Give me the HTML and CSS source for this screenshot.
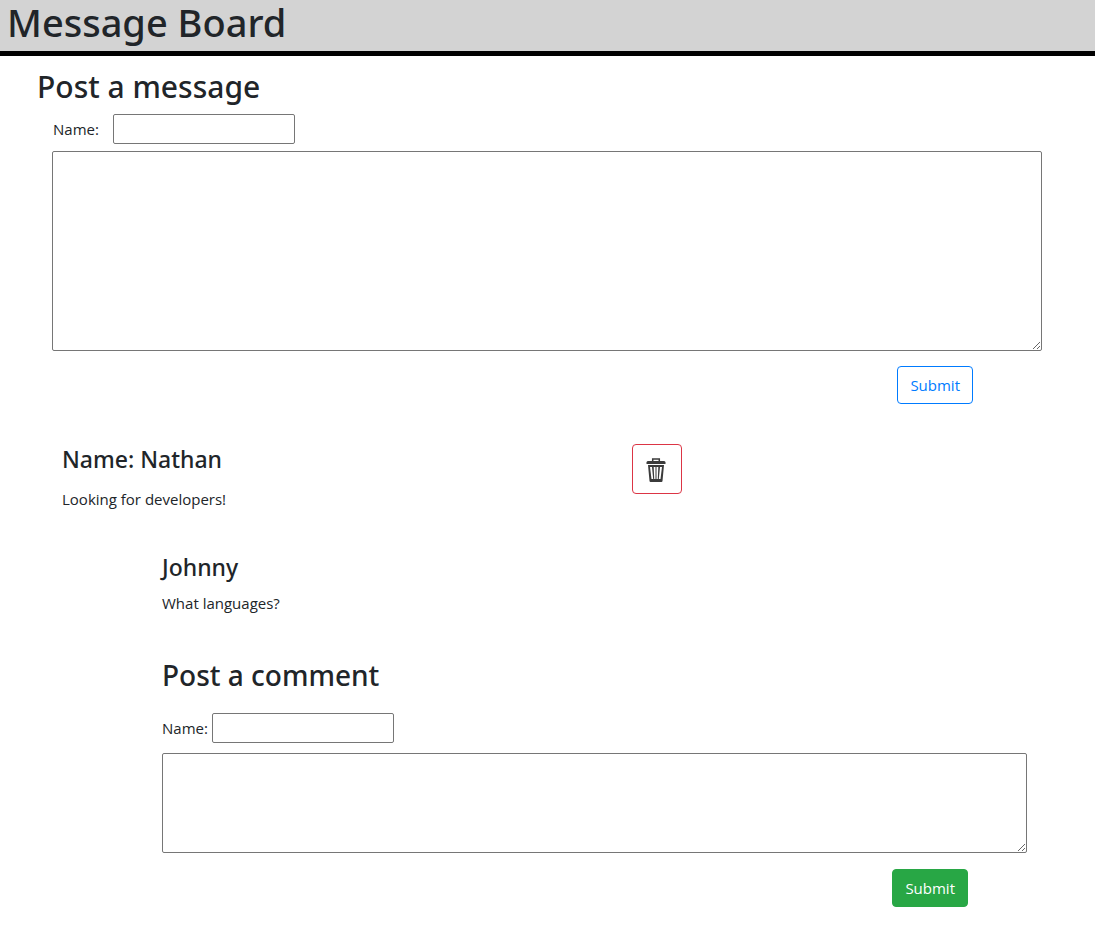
FILE: index.html
```html
<!DOCTYPE html>
<html lang="en">
<head>
<meta charset="utf-8">
<meta name="viewport" content="width=device-width, initial-scale=1">
<title>Message Board</title>
<link rel="stylesheet" href="styles.css">
</head>
<body>
<header class="site-header"><h1 class="site-title">Message Board</h1></header>
<main class="board">
  <form class="post-form">
    <h2 class="post-heading">Post a message</h2>
    <div class="field field-post">
      <label for="post-name">Name:</label>
      <input class="name-input" id="post-name" type="text">
    </div>
    <textarea class="post-text" aria-label="Message"></textarea>
    <div class="post-actions"><button class="btn btn-outline" type="button">Submit</button></div>
  </form>
  <article class="message">
    <div class="message-head">
      <div class="message-body">
        <h3 class="author">Name: Nathan</h3>
        <p class="message-text">Looking for developers!</p>
      </div>
      <button class="btn-delete" type="button" aria-label="Delete message">
        <svg class="trash" viewBox="0 0 20 24" aria-hidden="true">
          <path d="M6.700 3V.9h6.600V3" fill="none" stroke="#3b3b3b" stroke-width="1.500"/>
          <path d="M1.600 3h16.800l1.100 1v2H.5V4z" fill="#3b3b3b"/>
          <path fill-rule="evenodd" d="M2 7h16l-1.500 16q-.1 1-1 1h-11q-.9 0-1-1zM4 9l1.500 12h1.700L6 9zm3.700 0 .5 12h1.300V9zm2.800 0v12h1.300l.5-12zm3.500 0-1.200 12h1.700L16 9z" fill="#3b3b3b"/>
        </svg>
      </button>
    </div>
    <section class="comments">
      <h3 class="author">Johnny</h3>
      <p class="comment-text">What languages?</p>
      <form class="comment-form">
        <h2 class="comment-heading">Post a comment</h2>
        <div class="field field-comment">
          <label for="comment-name">Name:</label>
          <input class="name-input" id="comment-name" type="text">
        </div>
        <textarea class="comment-textarea" aria-label="Comment"></textarea>
        <div class="comment-actions"><button class="btn btn-success" type="button">Submit</button></div>
      </form>
    </section>
  </article>
</main>
</body>
</html>
```
FILE: styles.css
```css
*, *::before, *::after { box-sizing: border-box; }
body {
  margin: 0;
  background: #fff;
  color: #212529;
  font: 400 15px/24px "Segoe UI", "Open Sans", "Noto Sans", sans-serif;
}
h1, h2, h3, p { margin: 0; }
h1, h2, h3 { font-family: "Segoe UI", "Noto Sans", sans-serif; font-weight: 500; }
.site-header { background: #d3d3d3; border-bottom: 5px solid #000; padding: 0 7px 7px; }
.site-title { font-size: 38px; line-height: 44px; }
.board { padding: 12px 38px 22px 37px; }
.post-heading { font-size: 30px; line-height: 38px; }
.field { display: flex; align-items: center; }
.field-post { gap: 14px; margin: 8px 0 7px 16px; }
.field-comment { gap: 4px; margin-bottom: 10px; }
.name-input {
  width: 182px; height: 30px; padding: 1px 2px;
  border: 1px solid #767676; border-radius: 2px; font: inherit;
}
textarea {
  display: block; margin: 0; padding: 2px;
  border: 1px solid #767676; border-radius: 2px;
  background: #fff; font: inherit; resize: both;
}
.post-text { width: calc(100% - 30px); height: 200px; margin-left: 15px; }
.post-actions { display: flex; justify-content: flex-end; padding: 15px 84px 0 0; }
.btn {
  height: 38px; padding: 6px 12px; border: 1px solid; border-radius: 4px;
  font: inherit; cursor: pointer;
}
.btn-outline { color: #007bff; border-color: #007bff; background: #fff; }
.btn-success { color: #fff; border-color: #28a745; background: #28a745; }
.message { padding: 40px 0 0 25px; }
.message-head { display: grid; grid-template-columns: 57% auto; column-gap: 3px; justify-content: start; align-items: start; }
.author { font-size: 23px; line-height: 30px; }
.message-text { margin-top: 13px; }
.btn-delete {
  display: flex; align-items: center; justify-content: center;
  width: 50px; height: 50px; padding: 2px 2px 0 0;
  border: 1px solid #dc3545; border-radius: 4px; background: #fff; cursor: pointer;
}
.trash { width: 20px; height: 24px; }
.comments { padding: 41px 0 0 100px; }
.comment-text { margin-top: 9px; }
.comment-heading { font-size: 28px; line-height: 34px; margin: 43px 0 21px; }
.comment-textarea { width: calc(100% - 30px); height: 100px; }
.comment-actions { display: flex; justify-content: flex-end; padding: 16px 89px 0 0; }
```
